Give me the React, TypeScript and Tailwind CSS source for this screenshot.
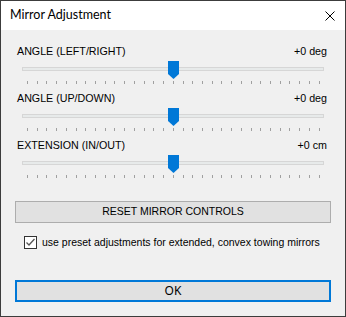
import React from "react";

const sliders = [
  { label: "ANGLE (LEFT/RIGHT)", value: "+0 deg" },
  { label: "ANGLE (UP/DOWN)", value: "+0 deg" },
  { label: "EXTENSION (IN/OUT)", value: "+0 cm" },
];

const Slider = ({ label, value }: { label: string; value: string }) => (
  <div className="mb-[8px]">
    <div className="flex justify-between pl-[16px] pr-[18px] h-[13px] leading-[13px] text-[10.7px] text-black">
      <span>{label}</span>
      <span>{value}</span>
    </div>
    <div className="relative mx-[21px] mt-[3px] pt-[6px] h-[18px]">
      <div className="h-[4px] border border-[#d6d6d6] bg-[#e7eaea]"></div>
      <svg className="absolute top-0 left-[146px]" width="11" height="18" viewBox="0 0 11 18">
        <path d="M0 0H11V13L5.5 18L0 13Z" fill="#0078d7" />
      </svg>
    </div>
    <div className="flex justify-between ml-[26px] mr-[25px] mt-[2px] h-[3px]">
      {Array.from({ length: 31 }).map((_, i) => (
        <div key={i} className="w-px h-full bg-[#a0a0a0]"></div>
      ))}
    </div>
  </div>
);

const App = () => {
  return (
    <div
      className="w-[346px] h-[317px] border border-[#3c3c3c] bg-[#f0f0f0] flex flex-col"
      style={{ fontFamily: '"Liberation Sans", Arial, sans-serif' }}
    >
      {/* Title bar */}
      <div className="h-[29px] bg-white flex items-center justify-between pl-[9px] pr-[10px]">
        <span className="text-[12.5px] text-black" style={{ fontFamily: 'Lato, "Noto Sans", sans-serif' }}>
          Mirror Adjustment
        </span>
        <svg width="10" height="10" viewBox="0 0 10 10">
          <path d="M0.5 0.5L9.5 9.5M9.5 0.5L0.5 9.5" stroke="#000" strokeWidth="1" />
        </svg>
      </div>

      <div className="flex-1 pt-[15px]">
        {sliders.map((s) => (
          <Slider key={s.label} label={s.label} value={s.value} />
        ))}

        <div className="mx-[14px] mt-[23px] h-[22px] border border-[#adadad] bg-[#e1e1e1] flex items-center justify-center text-[10.5px] text-black">
          RESET MIRROR CONTROLS
        </div>

        <div className="flex items-center ml-[23px] mt-[13px] h-[13px]">
          <div className="w-[13px] h-[13px] border border-[#333] bg-white flex items-center justify-center">
            <svg width="11" height="11" viewBox="0 0 11 11">
              <path d="M1.5 5.5L4 8L9.5 2" stroke="#555" strokeWidth="1.3" fill="none" />
            </svg>
          </div>
          <span className="ml-[5px] text-[10.5px] text-black leading-[13px]">
            use preset adjustments for extended, convex towing mirrors
          </span>
        </div>

        <div
          className="mx-[14px] mt-[31px] h-[22px] border-2 border-[#0078d7] bg-[#e1e1e1] flex items-center justify-center text-[12px] text-black"
          style={{ fontFamily: '"Noto Sans", sans-serif' }}
        >
          OK
        </div>
      </div>
    </div>
  );
};

export default App;
